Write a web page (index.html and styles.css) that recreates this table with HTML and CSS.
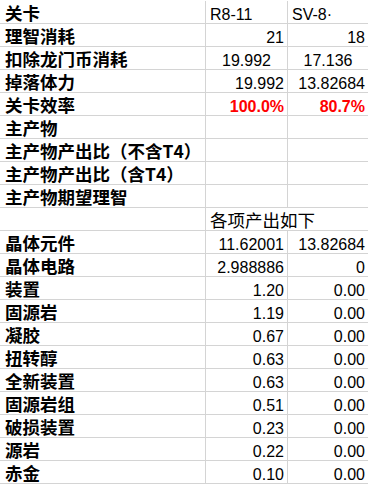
FILE: index.html
```html
<!DOCTYPE html>
<html lang="zh">
<head>
<meta charset="utf-8">
<title>关卡效率</title>
<link rel="stylesheet" href="styles.css">
</head>
<body>
<div class="sheet">
  <div class="c lbl">关卡</div><div class="c txt">R8-11</div><div class="c txt">SV-8·</div>
  <div class="c lbl">理智消耗</div><div class="c num">21</div><div class="c num">18</div>
  <div class="c lbl">扣除龙门币消耗</div><div class="c num mid">19.992</div><div class="c num mid">17.136</div>
  <div class="c lbl">掉落体力</div><div class="c num">19.992</div><div class="c num">13.82684</div>
  <div class="c lbl">关卡效率</div><div class="c num red">100.0%</div><div class="c num red">80.7%</div>
  <div class="c lbl">主产物</div><div class="c"></div><div class="c"></div>
  <div class="c lbl">主产物产出比（不含T4）</div><div class="c"></div><div class="c"></div>
  <div class="c lbl">主产物产出比（含T4）</div><div class="c"></div><div class="c"></div>
  <div class="c lbl">主产物期望理智</div><div class="c"></div><div class="c"></div>
  <div class="c lbl"></div><div class="c cjk span2">各项产出如下</div>
  <div class="c lbl">晶体元件</div><div class="c num">11.62001</div><div class="c num">13.82684</div>
  <div class="c lbl">晶体电路</div><div class="c num">2.988886</div><div class="c num">0</div>
  <div class="c lbl">装置</div><div class="c num">1.20</div><div class="c num">0.00</div>
  <div class="c lbl">固源岩</div><div class="c num">1.19</div><div class="c num">0.00</div>
  <div class="c lbl">凝胶</div><div class="c num">0.67</div><div class="c num">0.00</div>
  <div class="c lbl">扭转醇</div><div class="c num">0.63</div><div class="c num">0.00</div>
  <div class="c lbl">全新装置</div><div class="c num">0.63</div><div class="c num">0.00</div>
  <div class="c lbl">固源岩组</div><div class="c num">0.51</div><div class="c num">0.00</div>
  <div class="c lbl">破损装置</div><div class="c num">0.23</div><div class="c num">0.00</div>
  <div class="c lbl">源岩</div><div class="c num">0.22</div><div class="c num">0.00</div>
  <div class="c lbl">赤金</div><div class="c num">0.10</div><div class="c num">0.00</div>
</div>
</body>
</html>
```
FILE: styles.css
```css
html, body {
  margin: 0;
  padding: 0;
  background: #ffffff;
  overflow: hidden;
}
body {
  width: 368px;
  height: 484px;
}
.sheet {
  display: grid;
  grid-template-columns: 206px 82px 81px;
  grid-auto-rows: 23px;
  padding-top: 1px;
  color: #000000;
  font-family: "Liberation Sans", Arial, "Noto Sans CJK SC", sans-serif;
  font-size: 16px;
}
.c {
  box-sizing: border-box;
  display: flex;
  align-items: flex-end;
  border-right: 1px solid #d4d4d4;
  border-bottom: 1px solid #d4d4d4;
  padding: 0 3px 0 4px;
  line-height: 16px;
  white-space: nowrap;
  overflow: hidden;
}
.lbl {
  font-family: "Noto Sans CJK SC", sans-serif;
  font-weight: 700;
  font-size: 17.5px;
  padding-left: 5px;
  padding-bottom: 2px;
}
.cjk {
  font-family: "Noto Sans CJK SC", sans-serif;
  font-size: 17.5px;
  padding-bottom: 2px;
}
.span2 {
  grid-column: span 2;
}
.txt {
  justify-content: flex-start;
}
.num {
  justify-content: flex-end;
}
.mid {
  justify-content: center;
  padding: 0;
}
.red {
  color: #ff0000;
  font-weight: 700;
}
```
